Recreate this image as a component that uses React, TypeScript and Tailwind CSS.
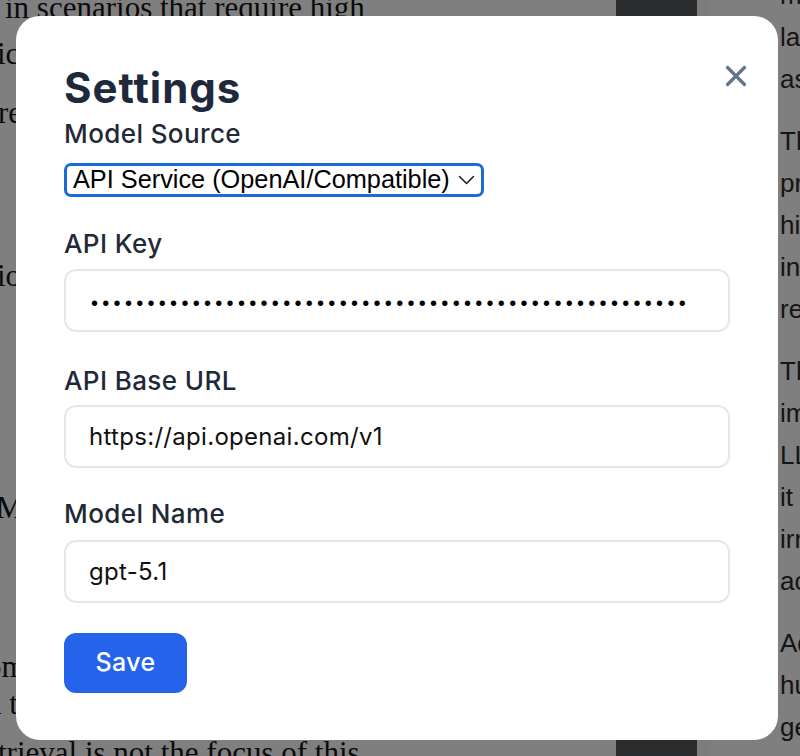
import React from "react";

const DOTS = "•".repeat(53);

function Field({ label, labelMt, inputMt, children }: { label: string; labelMt: string; inputMt: string; children: React.ReactNode }) {
  return (
    <div>
      <label className={`block ${labelMt} text-[26px] leading-[36px] tracking-[0.4px] font-medium text-[#1f2937]`}>{label}</label>
      <div className={inputMt}>{children}</div>
    </div>
  );
}

export default function App() {
  return (
    <div className="relative w-[800px] h-[756px] overflow-hidden bg-white">
      {/* background document */}
      <div className="flex h-full">
        <div className="w-[616px] h-full overflow-hidden whitespace-nowrap font-['Liberation_Serif',serif] text-[31px] leading-[31px] text-[#141414]">
          <div className="mt-[-8px] pl-[5px]">in scenarios that require high</div>
          <div className="mt-[15px] ml-[-3px]">ication of the retrieved passages and</div>
          <div className="mt-[28px] ml-[-2px]">relevant documents for the query</div>
          <div className="mt-[132px] ml-[-3px]">ion of the retrieval augmented</div>
          <div className="mt-[201px] ml-[-4px]">Models and retrieval</div>
          <div className="mt-[128px] ml-[-14px]">om the model output</div>
          <div className="mt-[6px] ml-[-14px]">d the generated answer</div>
          <div className="mt-[18px] ml-[-2px]">trieval is not the focus of this</div>
        </div>
        <div className="w-[81px] h-full bg-[#56595c]" />
        <div className="w-[13px] h-full bg-[#fafafa]" />
        <div className="flex-1 h-full overflow-hidden whitespace-nowrap pl-[70px] font-['Liberation_Sans',Arial,sans-serif] text-[26px] leading-[42px] text-[#2a2a2a]">
          <div className="mt-[-26px] mb-[20px]">
            <div>models</div>
            <div>large language</div>
            <div>as well</div>
          </div>
          <div className="mb-[20px]">
            <div>The</div>
            <div>precision</div>
            <div>high</div>
            <div>information</div>
            <div>relevant</div>
          </div>
          <div className="mb-[20px]">
            <div>The</div>
            <div>importance</div>
            <div>LLMs</div>
            <div>it is</div>
            <div>irrelevant</div>
            <div>accuracy</div>
          </div>
          <div>
            <div>Additionally</div>
            <div>human</div>
            <div>generation</div>
          </div>
        </div>
      </div>

      {/* overlay */}
      <div className="absolute inset-0 bg-black/50 p-4">
        <div className="relative w-[762px] rounded-3xl bg-white px-12 pt-12 pb-[47px] font-['Inter',sans-serif]">
          <button className="absolute right-[31px] top-[49px] w-[22px] h-[22px]" aria-label="Close">
            <svg width="22" height="22" viewBox="0 0 22 22" fill="none" stroke="#64748b" strokeWidth="3.2" strokeLinecap="round">
              <path d="M2.5 2.5L19.5 19.5M19.5 2.5L2.5 19.5" />
            </svg>
          </button>

          <h2 className="text-[42px] leading-[48px] tracking-[1px] font-bold text-[#1e293b]">Settings</h2>

          <label className="block mt-[4px] text-[26px] leading-[36px] tracking-[0.4px] font-medium text-[#1f2937]">Model Source</label>
          <div className="mt-[11px] w-[420px] h-[34px] rounded-[7px] border-[3px] border-[#1b6bd6] flex items-center justify-between pl-[6px] pr-[6px] font-['Liberation_Sans',Arial,sans-serif] text-[25.3px] text-black">
            <span>API Service (OpenAI/Compatible)</span>
            <svg width="17" height="10" viewBox="0 0 17 10" fill="none" stroke="#222" strokeWidth="1.6" strokeLinecap="round" strokeLinejoin="round">
              <path d="M1.5 1.5L8.5 8.5L15.5 1.5" />
            </svg>
          </div>

          <Field label="API Key" labelMt="mt-[29px]" inputMt="mt-[7px]">
            <div className="h-[63px] rounded-xl border-2 border-[#e5e7eb] bg-white px-[25px] flex items-center">
              <span className="pt-[5px] font-['Liberation_Sans',Arial,sans-serif] text-[20px] leading-[36px] tracking-[4.3px] text-black">{DOTS}</span>
            </div>
          </Field>

          <Field label="API Base URL" labelMt="mt-[31px]" inputMt="mt-[6px]">
            <input
              readOnly
              value="https://api.openai.com/v1"
              className="block w-full h-[63px] rounded-xl border-2 border-[#e5e7eb] bg-white px-[23px] text-[24px] tracking-[0.3px] text-[#111] outline-none"
            />
          </Field>

          <Field label="Model Name" labelMt="mt-[28px]" inputMt="mt-[8px]">
            <input
              readOnly
              value="gpt-5.1"
              className="block w-full h-[63px] rounded-xl border-2 border-[#e5e7eb] bg-white px-[23px] text-[24px] tracking-[0.3px] text-[#111] outline-none"
            />
          </Field>

          <button className="mt-[30px] w-[123px] h-[60px] rounded-xl bg-[#2563eb] text-white text-[25px] tracking-[0.4px] font-medium">Save</button>
        </div>
      </div>
    </div>
  );
}
